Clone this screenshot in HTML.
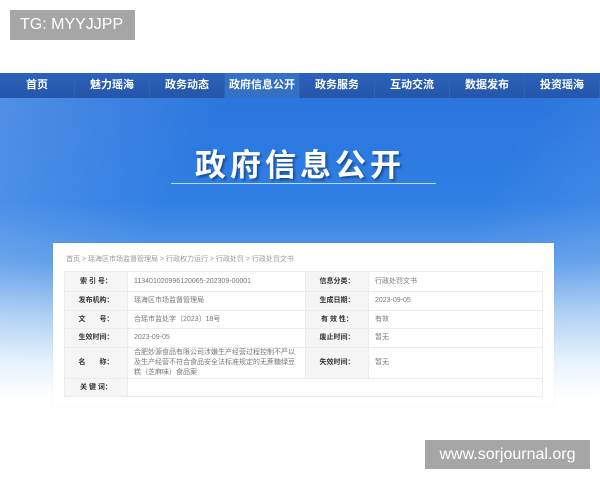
<!DOCTYPE html>
<html><head><meta charset="utf-8"><style>
*{margin:0;padding:0;box-sizing:border-box}
body{width:600px;height:480px;position:relative;background:#fff;font-family:"Liberation Sans","Noto Sans CJK SC",sans-serif;overflow:hidden}
.nav{position:absolute;top:73px;left:0;width:600px;height:25px;background:linear-gradient(#2d62bb,#2456aa);display:flex}
.nav div{flex:1;color:#fff;font-size:11px;font-weight:bold;text-align:center;line-height:25px;border-right:1px solid #2f63b6}
.nav div.on{background:#3470c4}
.banner{position:absolute;top:98px;left:0;width:600px;height:300px;background:linear-gradient(180deg,#2a76de 0%,#2f7fe4 35%,#5a9be9 55%,#a8ccf3 72%,#e6f1fc 88%,#fff 100%)}
.banner2{position:absolute;top:98px;left:0;width:600px;height:300px;background:linear-gradient(120deg,rgba(255,255,255,.18) 0%,rgba(255,255,255,0) 30%,rgba(255,255,255,0) 70%,rgba(255,255,255,.15) 100%)}
.title{position:absolute;top:140px;left:0;width:600px;text-align:center;color:#fff;font-size:31px;font-weight:bold;letter-spacing:4px;text-shadow:2px 2px 2px #1a4f9a}
.line{position:absolute;top:183px;left:171px;width:265px;height:1px;background:#bcd8f6}
.card{position:absolute;top:243px;left:53px;width:501px;height:163px;background:#fff;box-shadow:0 0 2px rgba(0,0,0,.06)}
.bc{position:absolute;top:254px;left:66px;font-size:7px;color:#999}
table{position:absolute;top:271px;left:64px;width:479px;border-collapse:collapse;font-size:7px;color:#777}
td{border:1px solid #ececec;padding:0 6px;line-height:10px}
td.l{background:#f5f5f5;color:#333;font-weight:bold;text-align:center;width:63px}
td.v1{width:178px}
td.l2{width:62px}
.wm{position:absolute;background:#a6a6a6;color:#fff;font-size:16px}
</style></head><body>
<div class="wm" style="left:10px;top:10px;width:125px;height:30px;line-height:30px;padding-left:10px">TG: MYYJJPP</div>
<div class="nav"><div>首页</div><div>魅力瑶海</div><div>政务动态</div><div class="on">政府信息公开</div><div>政务服务</div><div>互动交流</div><div>数据发布</div><div>投资瑶海</div></div>
<div class="banner"></div>
<div class="banner2"></div>
<div class="title">政府信息公开</div>
<div class="line"></div>
<div class="card"></div>
<div class="bc">首页 &gt; 瑶海区市场监督管理局 &gt; 行政权力运行 &gt; 行政处罚 &gt; 行政处罚文书</div>
<table>
<tr style="height:20px"><td class="l">索 引 号：</td><td class="v1">113401020996120065-202309-00001</td><td class="l l2">信息分类：</td><td>行政处罚文书</td></tr>
<tr style="height:19px"><td class="l">发布机构：</td><td>瑶海区市场监督管理局</td><td class="l">生成日期：</td><td>2023-09-05</td></tr>
<tr style="height:18px"><td class="l">文　　号：</td><td>合瑶市监处字〔2023〕18号</td><td class="l">有 效 性：</td><td>有效</td></tr>
<tr style="height:19px"><td class="l">生效时间：</td><td>2023-09-05</td><td class="l">废止时间：</td><td>暂无</td></tr>
<tr style="height:31px"><td class="l">名　　称：</td><td>合肥妙源食品有限公司涉嫌生产经营过程控制不严以及生产经营不符合食品安全法标准规定的无蔗糖绿豆糕（芝麻味）食品案</td><td class="l">失效时间：</td><td>暂无</td></tr>
<tr style="height:18px"><td class="l">关 键 词：</td><td colspan="3"></td></tr>
</table>
<div class="wm" style="left:425px;top:440px;width:165px;height:29px;line-height:29px;text-align:center">www.sorjournal.org</div>
</body></html>
